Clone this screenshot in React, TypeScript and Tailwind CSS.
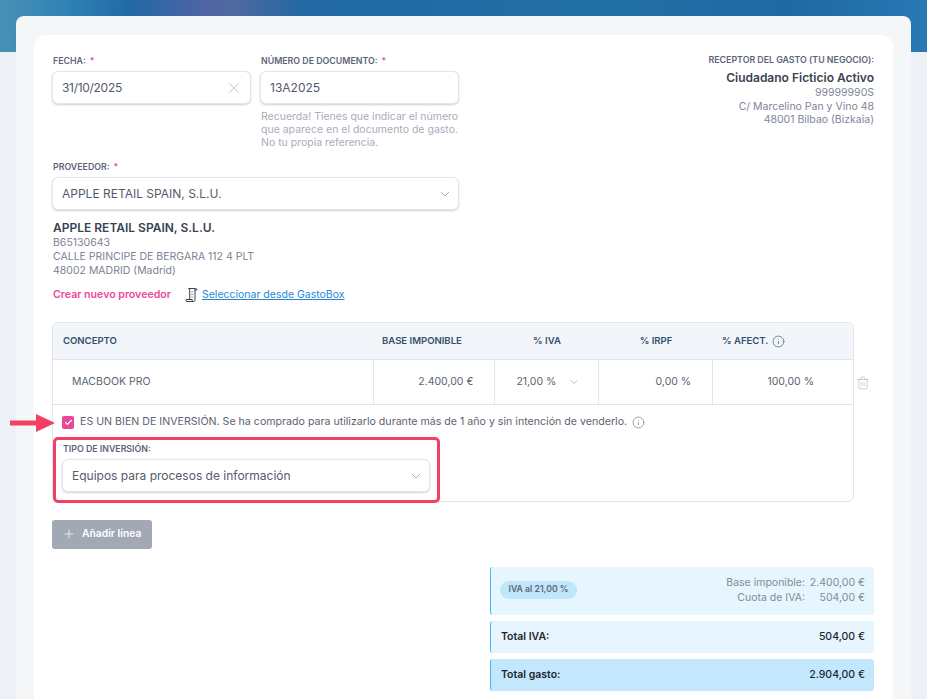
import { Check, ChevronDown, Info, Plus, Trash2, X } from "lucide-react";

const FONT = "font-['Inter','Noto_Sans',sans-serif]";

function FieldLabel({ text, required }: { text: string; required?: boolean }) {
  return (
    <p className="mb-[3px] h-[14px] pl-[1px] text-[8.8px] leading-[14px] font-semibold text-[#5c6479] uppercase">
      {text}
      {required && <span className="ml-1 text-[#ec4899]">*</span>}
    </p>
  );
}

function InputBox({ value, className, icon }: { value: string; className?: string; icon?: React.ReactNode }) {
  return (
    <div
      className={`flex h-[33px] items-center justify-between rounded-[6px] border border-[#e3e5eb] bg-white pr-[8px] pl-[9px] text-[12px] text-[#545b6b] shadow-[0_1px_2px_rgba(30,41,59,0.22)] ${className ?? ""}`}
    >
      <span>{value}</span>
      {icon}
    </div>
  );
}

function TotalBar({ label, value, strong }: { label: string; value: string; strong?: boolean }) {
  return (
    <div
      className={`flex h-[32px] items-center justify-between rounded-[3px] border-l border-[#38bdf8] pr-[9px] pl-[10px] text-[10.5px] text-[#1f2530] ${strong ? "bg-[#c3e8fd]" : "bg-[#e6f5fe]"}`}
    >
      <span className="font-semibold">{label}</span>
      <span className="font-medium">{value}</span>
    </div>
  );
}

export default function App() {
  const chevron = <ChevronDown size={16} strokeWidth={1.1} className="-mr-[3px] text-[#8b92a0]" />;

  return (
    <div className={`h-[699px] overflow-hidden bg-[#edf0f6] ${FONT}`}>
      <div className="h-[52px] bg-[linear-gradient(92deg,#4a90b5_0%,#2f83b5_7%,#2269a6_14%,#4f64a5_22%,#5069a0_25%,#2168a4_33%,#2270a5_65%,#2068a4_85%,#2879b4_100%)]" />
      <div className="mx-[16px] -mt-[36px] h-[720px] rounded-t-[8px] bg-[#f4f6f8] px-[18px] pt-[19px]">
        <div className="relative h-[700px] rounded-t-[12px] bg-white pt-[19px] pr-[19px] pl-[18px]">
          <div className="flex justify-between">
            <div className="w-[407px]">
              <div className="flex gap-[9px]">
                <div className="w-[199px]">
                  <FieldLabel text="Fecha:" required />
                  <InputBox
                    value="31/10/2025"
                    className="text-[11.5px] tracking-[-0.3px]"
                    icon={<X size={18} strokeWidth={0.8} className="-mr-[1px] text-[#9aa1ad]" />}
                  />
                </div>
                <div className="w-[199px]">
                  <FieldLabel text="Número de documento:" required />
                  <InputBox value="13A2025" className="pl-[8px]" />
                  <p className="mt-[6px] pl-[1px] text-[10.5px] leading-[13px] text-[#a9adbb]">
                    Recuerda! Tienes que indicar el número que aparece en el documento de gasto. No tu propia referencia.
                  </p>
                </div>
              </div>
              <div className="mt-[11px]">
                <FieldLabel text="Proveedor:" required />
                <InputBox value="APPLE RETAIL SPAIN, S.L.U." icon={chevron} />
              </div>
            </div>
            <div className="text-right">
              <p className="h-[16px] text-[8.8px] leading-[12px] font-semibold text-[#5c6479] uppercase">
                Receptor del gasto (tu negocio):
              </p>
              <p className="text-[12px] leading-[16px] font-semibold text-[#3b4252]">Ciudadano Ficticio Activo</p>
              <p className="text-[10.5px] leading-[13.5px] text-[#80869a]">99999990S</p>
              <p className="text-[10.5px] leading-[13.5px] text-[#80869a]">C/ Marcelino Pan y Vino 48</p>
              <p className="text-[10.5px] leading-[13.5px] text-[#80869a]">48001 Bilbao (Bizkaia)</p>
            </div>
          </div>

          <div className="mt-[10px] pl-[1px]">
            <p className="text-[12px] leading-[16px] font-semibold text-[#3b4252]">APPLE RETAIL SPAIN, S.L.U.</p>
            <p className="text-[10.5px] leading-[14px] text-[#7d8394]">B65130643</p>
            <p className="text-[10.5px] leading-[14px] text-[#7d8394]">CALLE PRINCIPE DE BERGARA 112 4 PLT</p>
            <p className="text-[10.5px] leading-[14px] text-[#7d8394]">48002 MADRID (Madrid)</p>
          </div>

          <div className="mt-[9px] flex h-[16px] items-center pl-[1px]">
            <span className="w-[132px] text-[10.6px] font-semibold text-[#ec4899]">Crear nuevo proveedor</span>
            <svg width="13" height="16" viewBox="0 0 13 16" fill="none" stroke="#3a404c" strokeWidth="1" className="mr-[4px]">
              <path d="M3.5 1.5h7c.9 0 1.5.6 1.5 1.5H9.8M3.5 1.5c.8 0 1.2.6 1.2 1.4v9.6M10 1.8v10.7c0 1.2-.6 2-1.6 2H2c-.8 0-1.3-.6-1.3-1.3 0-.4.3-.7.7-.7h5.8c0 1 .4 2 1.2 2" />
              <path d="M6 5h2.5M6 7.5h2.5M6 10h2.5" stroke="#a5abb5" />
            </svg>
            <span className="text-[10.5px] text-[#1f88d6] underline">Seleccionar desde GastoBox</span>
          </div>

          <div className="relative mt-[19px] flex">
            <div className="w-[802px] rounded-[6px] border border-[#e2e6ec]">
              <div className="flex h-[37px] items-center rounded-t-[6px] border-b border-[#e2e6ec] bg-[#f2f5f9] text-[9.55px] font-semibold text-[#33506e] uppercase">
                <div className="w-[320px] pl-[10px]">Concepto</div>
                <div className="w-[122px] pl-[9px]">Base imponible</div>
                <div className="w-[104px] text-center">% IVA</div>
                <div className="w-[114px] text-center">% IRPF</div>
                <div className="flex w-[140px] items-center pl-[9px]">
                  % Afect.
                  <Info size={13} strokeWidth={1.2} className="ml-[4px]" />
                </div>
              </div>
              <div className="flex h-[45px] items-stretch border-b border-[#e2e6ec] text-[10.5px] text-[#5c6372]">
                <div className="flex w-[320px] items-center pl-[19px]">MACBOOK PRO</div>
                <div className="flex w-[122px] items-center justify-end border-l border-[#e2e6ec] pr-[21px]">2.400,00 €</div>
                <div className="flex w-[104px] items-center border-l border-[#e2e6ec] pl-[21px]">
                  21,00 %
                  <ChevronDown size={12} strokeWidth={1.2} className="ml-[12px] text-[#8b92a0]" />
                </div>
                <div className="flex w-[114px] items-center justify-end border-l border-[#e2e6ec] pr-[21px]">0,00 %</div>
                <div className="flex w-[141px] items-center justify-end border-l border-[#e2e6ec] pr-[39px]">100,00 %</div>
              </div>
              <div className="h-[96px] px-[9px] pt-[10px]">
                <div className="flex h-[14px] items-center text-[10.64px] text-[#5c6372]">
                  <span className="mr-[6px] flex h-[13px] w-[12px] items-center justify-center rounded-[2px] bg-[#ec4899]">
                    <Check size={9} strokeWidth={3} className="text-white" />
                  </span>
                  ES UN BIEN DE INVERSIÓN. Se ha comprado para utilizarlo durante más de 1 año y sin intención de venderlo.
                  <Info size={13} strokeWidth={1.2} className="ml-[5px] text-[#6b7280]" />
                </div>
                <div className="relative mt-[8px] -ml-[9px] h-[66px] w-[387px] rounded-[5px] border-[3px] border-[#f43f63] bg-white pt-[2px] pr-[7px] pl-[6px]">
                  <p className="mb-[3px] h-[14px] pl-[1px] text-[8.8px] leading-[14px] font-semibold text-[#5c6479] uppercase">Tipo de inversión:</p>
                  <InputBox value="Equipos para procesos de información" icon={chevron} />
                </div>
              </div>
            </div>
            <Trash2 size={14} strokeWidth={1} className="mt-[54px] ml-[2px] text-[#a7acb6]" />
            {/* arrow pointing at the checkbox */}
            <svg width="46" height="18" viewBox="0 0 46 18" className="absolute top-[92px] -left-[42px]" fill="#f43f63">
              <path d="M0 6.5h26V0l19 9-19 9v-6.5H0z" />
            </svg>
          </div>

          <button className="mt-[18px] flex h-[29px] w-[100px] items-center rounded-[3px] bg-[#a2a8b4] pb-[1px] pl-[10px] text-[10.3px] font-semibold text-white">
            <Plus size={14} strokeWidth={1.2} className="mr-[6px]" />
            Añadir línea
          </button>

          <div className="mt-[18px] ml-[438px] w-[384px] space-y-[6px]">
            <div className="flex h-[48px] items-start justify-between rounded-[3px] border-l border-[#38bdf8] bg-[#e6f5fe] pt-[8px] pr-[9px] pl-[9px]">
              <span className="mt-[6px] flex h-[18px] items-center rounded-full bg-[#bfe6fb] px-[8.5px] text-[8.7px] font-semibold text-[#5c6779]">
                IVA al 21,00 %
              </span>
              <div className="text-right text-[10.5px] leading-[15px] text-[#858b98]">
                <div className="flex justify-end">
                  <span>Base imponible:</span>
                  <span className="w-[60px]">2.400,00 €</span>
                </div>
                <div className="flex justify-end">
                  <span>Cuota de IVA:</span>
                  <span className="w-[60px]">504,00 €</span>
                </div>
              </div>
            </div>
            <TotalBar label="Total IVA:" value="504,00 €" />
            <TotalBar label="Total gasto:" value="2.904,00 €" strong />
          </div>
        </div>
      </div>
    </div>
  );
}
